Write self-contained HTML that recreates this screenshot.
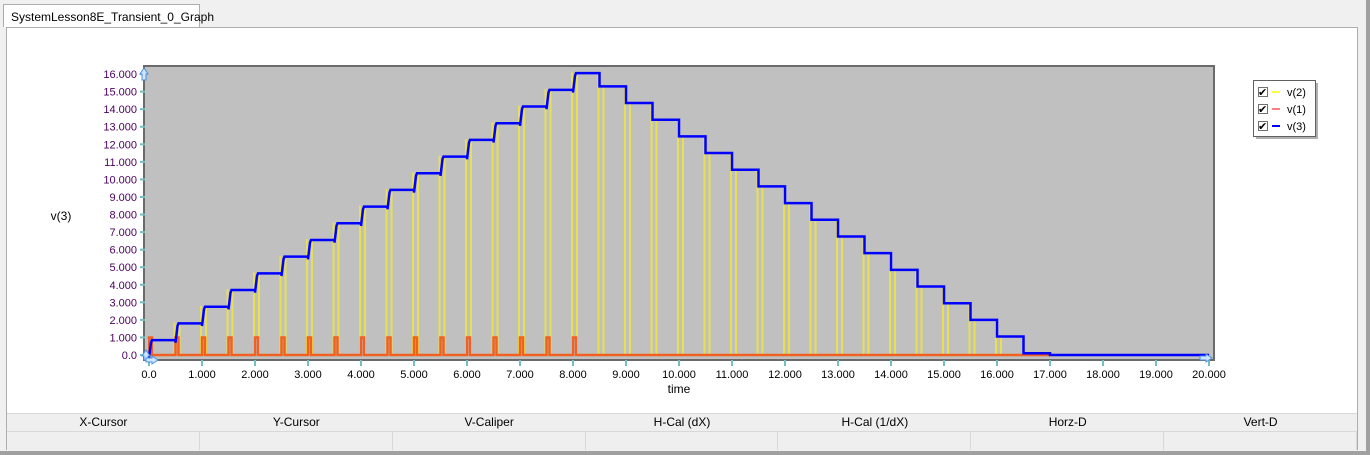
<!DOCTYPE html>
<html><head><style>
body{margin:0;width:1370px;height:455px;background:#f0f0f0;position:relative;overflow:hidden;font-family:"Liberation Sans",sans-serif;}
.tab{position:absolute;left:3px;top:4px;width:197px;height:23px;background:#fff;border:1px solid #adadad;border-bottom:none;font-size:12px;line-height:24px;padding-left:7px;box-sizing:border-box;}
.panel{position:absolute;left:6px;top:27px;width:1352px;height:423px;background:#fff;border:1px solid #adadad;box-sizing:border-box;}
.rb{position:absolute;left:1366px;top:0;width:4px;height:455px;background:#a0a0a0;}
.bb{position:absolute;left:0;top:451px;width:1370px;height:4px;background:#a0a0a0;}
.tbl{position:absolute;left:7px;top:413px;width:1350px;}
.hdr{display:flex;height:17px;background:#efefef;border-top:1px solid #d8d8d8;border-bottom:1px solid #d8d8d8;}
.hdr div{flex:1;text-align:center;font-size:12px;line-height:17px;color:#000;}
.row{display:flex;height:18px;background:#efefef;}
.row div{flex:1;border-right:1px solid #d8d8d8;}
</style></head><body>
<div class="rb"></div>
<div class="tab">SystemLesson8E_Transient_0_Graph</div>
<div class="panel"></div>
<svg width="1370" height="455" style="position:absolute;left:0;top:0" font-family="Liberation Sans, sans-serif" font-size="11">
<rect x="144" y="66" width="1070" height="294" fill="#c0c0c0" stroke="#6a6a6a" stroke-width="2"/>
<g id="yl" fill="#4b0060" text-anchor="end"></g>
<g id="xl" fill="#000" text-anchor="middle"></g>
<g id="tk" stroke="#70c0c0" stroke-width="2"></g>
<g id="yel" stroke="#e8e050" stroke-width="2"></g>
<path id="org" fill="none" stroke="#f06020" stroke-width="2.5"/>
<path id="blu" fill="none" stroke="#0000ff" stroke-width="2.5"/>
<text x="61" y="220" font-size="12" text-anchor="middle" fill="#000">v(3)</text>
<text x="679" y="393" font-size="12" text-anchor="middle" fill="#000">time</text>
<path d="M144 68 l-4 6 h2 v6 h4 v-6 h2 z" fill="#cfe4ff" stroke="#4a90e0"/>
<path d="M1212 358 l-6 -4 v2 h-6 v4 h6 v2 z" fill="#cfe4ff" stroke="#4a90e0"/>
<path d="M146 350 l-4 6 h2 v4 h4 v-4 h2 z" fill="#cfe4ff" stroke="#4a90e0"/>
<path d="M158 360 l-6 -4 v2 h-6 v4 h6 v2 z" fill="#cfe4ff" stroke="#4a90e0"/>
<rect x="1253.5" y="80.5" width="62" height="56" fill="#fff" stroke="#606060"/>
<rect x="1316" y="83" width="2" height="56" fill="#b0b0b0"/><rect x="1256" y="137" width="62" height="2" fill="#b0b0b0"/>
<g font-size="11" fill="#000">
<rect x="1258.5" y="87.5" width="9" height="9" fill="#fff" stroke="#707070"/><text x="1258" y="96">✔</text><line x1="1272" y1="92" x2="1280" y2="92" stroke="#ffff40" stroke-width="2"/><text x="1287" y="96">v(2)</text>
<rect x="1258.5" y="104.5" width="9" height="9" fill="#fff" stroke="#707070"/><text x="1258" y="113">✔</text><line x1="1272" y1="109" x2="1280" y2="109" stroke="#ff8080" stroke-width="2"/><text x="1287" y="113">v(1)</text>
<rect x="1258.5" y="121.5" width="9" height="9" fill="#fff" stroke="#707070"/><text x="1258" y="130">✔</text><line x1="1272" y1="126" x2="1280" y2="126" stroke="#0000ff" stroke-width="2"/><text x="1287" y="130">v(3)</text>
</g>
</svg>
<div class="tbl">
<div class="hdr"><div>X-Cursor</div><div>Y-Cursor</div><div>V-Caliper</div><div>H-Cal (dX)</div><div>H-Cal (1/dX)</div><div>Horz-D</div><div>Vert-D</div></div>
<div class="row"><div></div><div></div><div></div><div></div><div></div><div></div><div></div></div>
</div>
<div class="bb"></div>
<script>
var X=t=>149+t*53,Y=v=>355-v*17.56,ns="http://www.w3.org/2000/svg";
function el(p,tag,a,txt){var e=document.createElementNS(ns,tag);for(var k in a)e.setAttribute(k,a[k]);if(txt)e.textContent=txt;document.getElementById(p).appendChild(e);}
for(var i=0;i<=16;i++){var y=Y(i);el('yl','text',{x:137,y:y+4},i==0?"0.0":i.toFixed(3));el('tk','line',{x1:140,x2:145,y1:y,y2:y});}
for(var i=0;i<=20;i++){var x=X(i);el('xl','text',{x:x,y:378},i==0?"0.0":i.toFixed(3));el('tk','line',{x1:x,x2:x,y1:360,y2:366});}
var lv=[];for(var k=0;k<=16;k++)lv.push(0.85+0.95*k);for(var j=0;j<=16;j++)lv.push(15.3-0.95*j);lv.push(0);
var d="M"+X(0)+" "+Y(0);
for(var k=0;k<lv.length;k++){var t=k*0.5,x=X(t);var prev=k?lv[k-1]:0;
 if(lv[k]>prev){d+=" L"+x+" "+Y(prev)+" L"+x+" "+Y(prev-0.15)+" L"+(x+2)+" "+Y(lv[k]-0.15)+" L"+(x+3)+" "+Y(lv[k]);}
 else{d+=" L"+x+" "+Y(prev)+" L"+x+" "+Y(lv[k]);}
 if(k<33){el('yel','line',{x1:x-1,x2:x-1,y1:Y(0),y2:Y(Math.max(prev,lv[k])+0.05)});el('yel','line',{x1:x+4,x2:x+4,y1:Y(0),y2:Y(lv[k])});}}
d+=" L"+X(20)+" "+Y(0);
document.getElementById('blu').setAttribute('d',d);
var o="M"+X(0)+" "+Y(0);
for(var i=0;i<=16;i++){var x=X(i*0.5);o+=" L"+x+" "+Y(0)+" L"+x+" "+Y(1)+" L"+(x+3)+" "+Y(1)+" L"+(x+3)+" "+Y(0);}
o+=" L"+X(17)+" "+Y(0);
document.getElementById('org').setAttribute('d',o);
</script>
</body></html>
